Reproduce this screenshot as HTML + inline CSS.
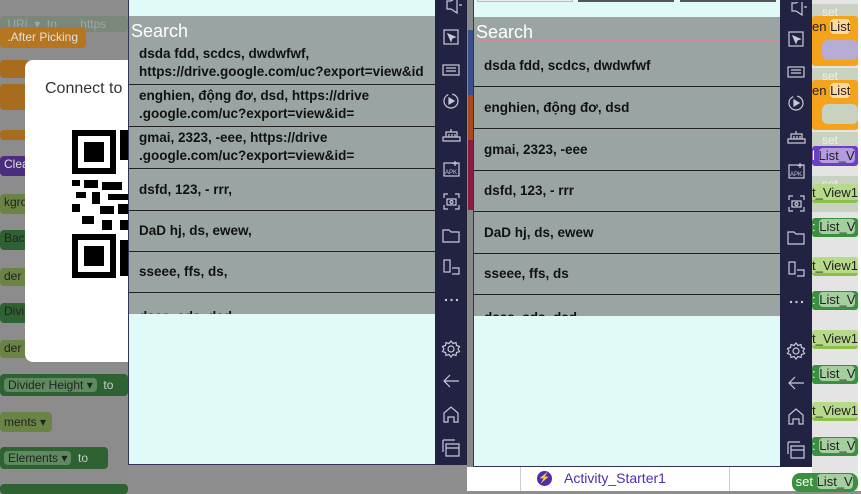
<!DOCTYPE html>
<html><head><meta charset="utf-8"><style>
*{margin:0;padding:0;box-sizing:border-box}
body{width:861px;height:491px;overflow:hidden;position:relative;background:#8e8e8e;font-family:"Liberation Sans","Noto Sans CJK SC",sans-serif}
.a{position:absolute}
.blk{position:absolute;border-radius:4px;color:#e0e0e0;font-size:12px;line-height:16px;padding-left:4px;white-space:nowrap;overflow:hidden}
.emu{position:absolute;background:#dffaf7;overflow:hidden}
.list{position:absolute;left:0;right:0;background:#9aa5a3;overflow:hidden}
.srch{position:absolute;left:2px;color:#fff;font-size:18px}
.pink{position:absolute;left:2px;right:0;height:1px;background:#d08aa0}
.row{position:absolute;left:0;right:0;height:42px;border-bottom:1.5px solid #222;font-weight:bold;font-size:13.5px;color:#111;overflow:hidden;white-space:nowrap}
.side{position:absolute;width:32px;background:#222342}
.rb{position:absolute;left:812px;width:46px;height:17px;border-radius:3px;font-size:12px;line-height:17px;color:#222;white-space:nowrap;overflow:hidden}
.gs{position:absolute;left:812px;width:46px;height:16px;background:#c9d2c0;color:#eee;font-size:12px;line-height:16px;padding-left:10px}
</style></head><body>
<div class="a" style="left:0;top:0;width:128px;height:491px;background:#8c8c8c"></div>
<div class="blk" style="left:0;top:16px;width:128px;height:16px;background:#7a877a;color:#9aa"> &nbsp;URL ▾ &nbsp;to &nbsp;&nbsp;&nbsp;&nbsp;&nbsp;&nbsp;https</div>
<div class="blk" style="left:0;top:27px;width:86px;height:21px;background:#b5761f;line-height:21px">&nbsp;.After Picking</div>
<div class="blk" style="left:0;top:60px;width:30px;height:18px;background:#a86c1e"></div>
<div class="blk" style="left:0;top:84px;width:30px;height:26px;background:#a86c1e"></div>
<div class="blk" style="left:0;top:130px;width:30px;height:10px;background:#a86c1e"></div>
<div class="blk" style="left:0;top:156px;width:28px;height:20px;background:#4a2d7e">Clea</div>
<div class="blk" style="left:0;top:194px;width:28px;height:20px;background:#6a8445;color:#222">kgro</div>
<div class="blk" style="left:0;top:230px;width:28px;height:20px;background:#2e6233;color:#222">Bac</div>
<div class="blk" style="left:0;top:268px;width:28px;height:18px;background:#6a8445;color:#222">der C</div>
<div class="blk" style="left:0;top:303px;width:28px;height:20px;background:#2e6233;color:#222">Divi</div>
<div class="blk" style="left:0;top:340px;width:28px;height:18px;background:#6a8445;color:#222">der H</div>
<div class="blk" style="left:0;top:374px;width:128px;height:22px;background:#2e6233;line-height:22px;color:#ccc"><span style="background:#5f8a5f;color:#222;border-radius:4px;padding:0 4px">Divider Height ▾</span> &nbsp;to</div>
<div class="blk" style="left:0;top:412px;width:52px;height:20px;background:#6a8445;color:#222;line-height:20px">ments ▾</div>
<div class="blk" style="left:0;top:447px;width:108px;height:22px;background:#2e6233;line-height:22px;color:#ccc"><span style="background:#5f8a5f;color:#222;border-radius:4px;padding:0 4px">Elements ▾</span> &nbsp;to</div>
<div class="blk" style="left:0;top:484px;width:128px;height:10px;background:#2e6233"></div>
<div class="a" style="left:25px;top:60px;width:110px;height:302px;background:#fff;border-radius:8px"></div>
<div class="a" style="left:45px;top:80px;font-size:16px;color:#333">Connect to</div>
<svg class="a" style="left:72px;top:130px" width="56" height="152" viewBox="0 0 56 152">
<rect x="0" y="0" width="44" height="44" fill="#000"/><rect x="6" y="6" width="32" height="32" fill="#fff"/><rect x="12" y="12" width="20" height="20" fill="#000"/>
<rect x="48" y="0" width="8" height="30" fill="#000"/>
<rect x="0" y="50" width="8" height="6" fill="#000"/><rect x="12" y="50" width="14" height="8" fill="#000"/><rect x="30" y="52" width="20" height="8" fill="#000"/>
<rect x="4" y="62" width="10" height="6" fill="#000"/><rect x="20" y="62" width="8" height="12" fill="#000"/><rect x="36" y="64" width="20" height="6" fill="#000"/>
<rect x="0" y="74" width="8" height="8" fill="#000"/><rect x="28" y="76" width="14" height="8" fill="#000"/><rect x="46" y="74" width="10" height="10" fill="#000"/>
<rect x="10" y="86" width="12" height="8" fill="#000"/><rect x="30" y="90" width="10" height="10" fill="#000"/><rect x="48" y="90" width="8" height="10" fill="#000"/>
<rect x="0" y="104" width="44" height="44" fill="#000"/><rect x="6" y="110" width="32" height="32" fill="#fff"/><rect x="12" y="116" width="20" height="20" fill="#000"/>
<rect x="48" y="110" width="8" height="36" fill="#000"/>
</svg>
<div class="emu" style="left:128px;top:0;width:308px;height:465px;border-left:1px solid #33335a;border-bottom:1px solid #33335a">
 <div class="list" style="top:16px;height:298px">
  <div class="srch" style="top:5px">Search</div><div class="pink" style="top:23px"></div>
  <div class="row" style="top:27px;padding:2px 0 0 10px;line-height:18px">dsda fdd, scdcs, dwdwfwf,<br>https://drive.google.com/uc?export=view&amp;id<br>=1eT9W3kX</div>
  <div class="row" style="top:69px;padding:2px 0 0 10px;line-height:18px">enghien, động đơ, dsd, https://drive<br>.google.com/uc?export=view&amp;id=<br>1e18W3kX</div>
  <div class="row" style="top:111px;padding:2px 0 0 10px;line-height:18px">gmai, 2323, -eee, https://drive<br>.google.com/uc?export=view&amp;id=<br>1QkjdMTA</div>
  <div class="row" style="top:153px;padding:13px 0 0 10px">dsfd, 123, - rrr,</div>
  <div class="row" style="top:194px;padding:13px 0 0 10px">DaD hj, ds, ewew,</div>
  <div class="row" style="top:235px;padding:13px 0 0 10px">sseee, ffs, ds,</div>
  <div class="row" style="top:277px;padding:16px 0 0 10px;border:none">dsss, sds, dsd</div>
 </div>
</div>
<div class="a" style="left:467px;top:0;width:6px;height:491px;background:#888"></div>
<div class="a" style="left:468px;top:30px;width:5px;height:170px;background:#3a4f8a"></div>
<div class="a" style="left:468px;top:95px;width:5px;height:45px;background:#a84a1a"></div>
<div class="a" style="left:468px;top:140px;width:5px;height:70px;background:#8a1c40"></div>
<div class="emu" style="left:473px;top:0;width:308px;height:467px;border-bottom:1px solid #33335a;border-left:1px solid #33335a">
 <div class="a" style="left:3px;top:-4px;width:96px;height:6px;border:1px solid #bbb;background:#eee"></div>
 <div class="a" style="left:104px;top:-4px;width:96px;height:6px;background:#555"></div>
 <div class="a" style="left:206px;top:-4px;width:96px;height:6px;background:#555"></div>
 <div class="list" style="top:17px;height:299px">
  <div class="srch" style="top:5px">Search</div><div class="pink" style="top:23px"></div>
  <div class="row" style="top:28px;padding:13px 0 0 10px">dsda fdd, scdcs, dwdwfwf</div>
  <div class="row" style="top:70px;padding:13px 0 0 10px">enghien, động đơ, dsd</div>
  <div class="row" style="top:112px;padding:13px 0 0 10px">gmai, 2323, -eee</div>
  <div class="row" style="top:153px;padding:13px 0 0 10px">dsfd, 123, - rrr</div>
  <div class="row" style="top:195px;padding:13px 0 0 10px">DaD hj, ds, ewew</div>
  <div class="row" style="top:236px;padding:13px 0 0 10px">sseee, ffs, ds</div>
  <div class="row" style="top:278px;padding:15px 0 0 10px;border:none">dsss, sds, dsd</div>
 </div>
</div>
<div class="a" style="left:467px;top:467px;width:345px;height:24px;background:#fff"></div>
<div class="a" style="left:520px;top:467px;width:1px;height:24px;background:#ccc"></div>
<div class="a" style="left:729px;top:467px;width:1px;height:24px;background:#ccc"></div>
<div class="a" style="left:537px;top:471px;width:15px;height:15px;border-radius:50%;background:#4b2fb0;color:#fff;font-size:10px;text-align:center;line-height:15px">⚡</div>
<div class="a" style="left:564px;top:470px;font-size:14px;color:#4b2fb0">Activity_Starter1</div>
<div class="side" style="left:435px;top:0;height:465px"></div>
<div class="side" style="left:780px;top:0;height:467px"></div>
<div class="a" style="left:812px;top:0;width:49px;height:491px;background:#e4e4e4"></div>
<div class="a" style="left:858px;top:0;width:3px;height:491px;background:#fff"></div>
<div class="gs" style="top:4px">set</div>
<div class="gs" style="top:68px">set</div>
<div class="gs" style="top:132px">set</div>
<div class="gs" style="top:176px;height:36px">set</div>
<div class="rb" style="top:16px;height:50px;background:#f6a31c;line-height:22px;font-size:13px">en <span style="background:#fdd9a0;border-radius:4px">List</span><div style="margin:2px 0 0 10px;height:20px;background:#b7acd6;border-radius:6px"></div></div>
<div class="rb" style="top:80px;height:50px;background:#f6a31c;line-height:22px;font-size:13px">en <span style="background:#fdd9a0;border-radius:4px">List</span><div style="margin:2px 0 0 10px;height:20px;background:#c9d2c0;border-radius:6px"></div></div>
<div class="rb" style="top:146px;height:20px;background:#6a3fc3;color:#fff;line-height:20px;font-size:13px">l <span style="background:#b39be0;color:#222;border-radius:4px">List_V</span></div>
<div class="rb" style="top:184px;height:19px;background:#b7d98a;border-bottom:3px solid #8cc04a;font-size:13px">t_View1</div>
<div class="rb" style="top:218px;height:19px;background:#3a8f40;color:#fff;font-size:13px">: <span style="background:#a6cfa0;color:#222;border-radius:4px">List_V</span></div>
<div class="rb" style="top:257px;height:19px;background:#b7d98a;border-bottom:3px solid #8cc04a;font-size:13px">t_View1</div>
<div class="rb" style="top:291px;height:19px;background:#3a8f40;color:#fff;font-size:13px">: <span style="background:#a6cfa0;color:#222;border-radius:4px">List_V</span></div>
<div class="rb" style="top:330px;height:19px;background:#b7d98a;border-bottom:3px solid #8cc04a;font-size:13px">t_View1</div>
<div class="rb" style="top:365px;height:19px;background:#3a8f40;color:#fff;font-size:13px">: <span style="background:#a6cfa0;color:#222;border-radius:4px">List_V</span></div>
<div class="rb" style="top:402px;height:19px;background:#b7d98a;border-bottom:3px solid #8cc04a;font-size:13px">t_View1</div>
<div class="rb" style="top:437px;height:19px;background:#3a8f40;color:#fff;font-size:13px">: <span style="background:#a6cfa0;color:#222;border-radius:4px">List_V</span></div>
<div class="rb" style="top:473px;left:792px;width:66px;height:19px;background:#3a8f40;color:#fff;border-radius:8px;font-size:13px">&nbsp;set <span style="background:#a6cfa0;color:#222;border-radius:4px">List_V</span></div>
<svg class="a" style="left:435px;top:0" width="32" height="465" fill="none" stroke="#c8c8d8" stroke-width="1.2">
<g transform="translate(8,-3)"><path d="M4 4h4l6-4v16l-6-4H4z M16 8h3"/></g>
<g transform="translate(9,30)"><rect x="0" y="0" width="14" height="14"/><path d="M4 4l7 3-3 1-1 3z" fill="#c8c8d8"/></g>
<g transform="translate(8,63)"><rect x="0" y="2" width="16" height="10"/><path d="M3 5h10M3 8h10"/></g>
<g transform="translate(9,94)"><circle cx="7" cy="7" r="7" stroke-dasharray="30 4"/><path d="M5 4l5 3-5 3z" fill="#c8c8d8"/></g>
<g transform="translate(8,129)"><path d="M0 8h17v4H0z M3 8V3h11v5 M8 0v3 M6 5v3M9 5v3M12 5v3"/></g>
<g transform="translate(9,161)"><rect x="0" y="2" width="15" height="13"/><text x="1" y="13" font-size="6" fill="#c8c8d8" stroke="none" font-family="Liberation Sans">APK</text><path d="M11 0v5M8.5 2.5h5"/></g>
<g transform="translate(9,194)"><path d="M0 4V0h4M11 0h4v4M15 11v4h-4M4 15H0v-4"/><rect x="3" y="5" width="9" height="6"/><circle cx="7.5" cy="8" r="1.5"/></g>
<g transform="translate(8,228)"><path d="M0 2h6l2 2h8v10H0z"/></g>
<g transform="translate(9,260)"><rect x="0" y="0" width="6" height="12"/><path d="M8 8h7v6H8"/></g>
<g transform="translate(9,298)" fill="#c8c8d8" stroke="none"><circle cx="2" cy="2" r="1.2"/><circle cx="7.5" cy="2" r="1.2"/><circle cx="13" cy="2" r="1.2"/></g>
<g transform="translate(8,341)"><circle cx="8" cy="8" r="3"/><path d="M8 0l2 2.5 3-1 .5 3 3 1-1.5 2.5 1.5 2.5-3 1-.5 3-3-1L8 16l-2-2.5-3 1-.5-3-3-1L1 8 -.5 5.5l3-1 .5-3 3 1z"/></g>
<g transform="translate(8,374)"><path d="M16 7H1M7 1L1 7l6 6"/></g>
<g transform="translate(8,407)"><path d="M1 15V6l7-6 7 6v9h-4v-5H5v5z"/></g>
<g transform="translate(8,440)"><path d="M0 0h12M0 0v12M3 4h13v12H3z M3 8h13"/></g>
</svg>
<svg class="a" style="left:780px;top:2px" width="32" height="465" fill="none" stroke="#c8c8d8" stroke-width="1.2">
<g transform="translate(8,-3)"><path d="M4 4h4l6-4v16l-6-4H4z M16 8h3"/></g>
<g transform="translate(9,30)"><rect x="0" y="0" width="14" height="14"/><path d="M4 4l7 3-3 1-1 3z" fill="#c8c8d8"/></g>
<g transform="translate(8,63)"><rect x="0" y="2" width="16" height="10"/><path d="M3 5h10M3 8h10"/></g>
<g transform="translate(9,94)"><circle cx="7" cy="7" r="7" stroke-dasharray="30 4"/><path d="M5 4l5 3-5 3z" fill="#c8c8d8"/></g>
<g transform="translate(8,129)"><path d="M0 8h17v4H0z M3 8V3h11v5 M8 0v3 M6 5v3M9 5v3M12 5v3"/></g>
<g transform="translate(9,161)"><rect x="0" y="2" width="15" height="13"/><text x="1" y="13" font-size="6" fill="#c8c8d8" stroke="none" font-family="Liberation Sans">APK</text><path d="M11 0v5M8.5 2.5h5"/></g>
<g transform="translate(9,194)"><path d="M0 4V0h4M11 0h4v4M15 11v4h-4M4 15H0v-4"/><rect x="3" y="5" width="9" height="6"/><circle cx="7.5" cy="8" r="1.5"/></g>
<g transform="translate(8,228)"><path d="M0 2h6l2 2h8v10H0z"/></g>
<g transform="translate(9,260)"><rect x="0" y="0" width="6" height="12"/><path d="M8 8h7v6H8"/></g>
<g transform="translate(9,298)" fill="#c8c8d8" stroke="none"><circle cx="2" cy="2" r="1.2"/><circle cx="7.5" cy="2" r="1.2"/><circle cx="13" cy="2" r="1.2"/></g>
<g transform="translate(8,341)"><circle cx="8" cy="8" r="3"/><path d="M8 0l2 2.5 3-1 .5 3 3 1-1.5 2.5 1.5 2.5-3 1-.5 3-3-1L8 16l-2-2.5-3 1-.5-3-3-1L1 8 -.5 5.5l3-1 .5-3 3 1z"/></g>
<g transform="translate(8,374)"><path d="M16 7H1M7 1L1 7l6 6"/></g>
<g transform="translate(8,407)"><path d="M1 15V6l7-6 7 6v9h-4v-5H5v5z"/></g>
<g transform="translate(8,440)"><path d="M0 0h12M0 0v12M3 4h13v12H3z M3 8h13"/></g>
</svg>
</body></html>
